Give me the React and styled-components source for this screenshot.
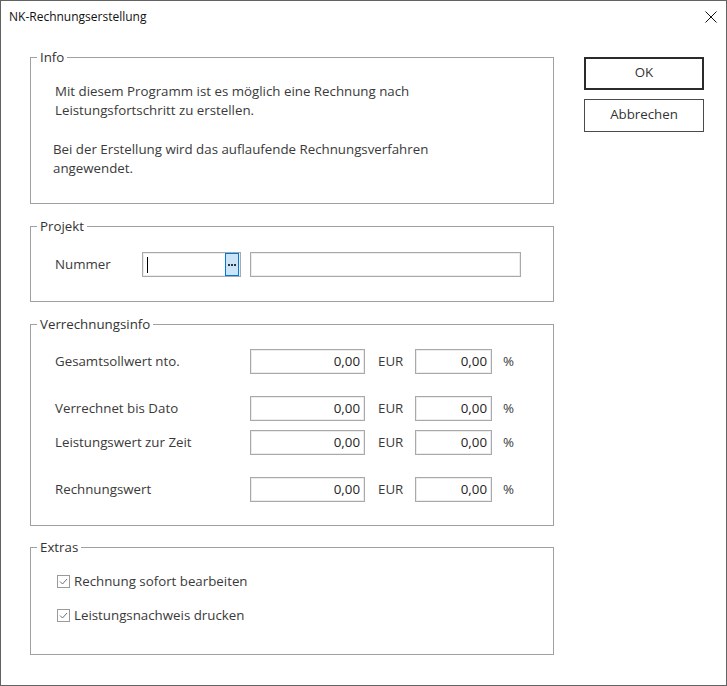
import React from "react";
import styled, { createGlobalStyle } from "styled-components";

const Global = createGlobalStyle`
  html, body { margin: 0; padding: 0; background: #fff; }
  body { font-family: "Open Sans", "Noto Sans", sans-serif; }
  * { box-sizing: border-box; }
`;

const Window = styled.div`
  width: 727px;
  height: 686px;
  border: 1px solid #626262;
  background: #fff;
  display: flex;
  flex-direction: column;
  color: #3a3a3a;
  font-size: 13.3px;
`;

const TitleBar = styled.div`
  height: 31px;
  display: flex;
  align-items: center;
  justify-content: space-between;
  padding: 0 9px 0 8px;
`;

const Title = styled.div`
  font-size: 12px;
  color: #111;
`;

const CloseBtn = styled.div`
  width: 12px;
  height: 12px;
  display: flex;
`;

const Content = styled.div`
  display: flex;
  padding: 16px 0 0 29px;
`;

const LeftCol = styled.div`
  width: 524px;
  display: flex;
  flex-direction: column;
`;

const RightCol = styled.div`
  width: 120px;
  margin-left: 30px;
  padding-top: 9px;
  display: flex;
  flex-direction: column;
  gap: 9px;
`;

const Button = styled.button`
  width: 120px;
  height: 33px;
  background: #fff;
  border: ${(p) => (p.$default ? "2px solid #2b2b2b" : "1px solid #4a4a4a")};
  font-family: inherit;
  font-size: 13.3px;
  color: #333;
  padding: 0 0 3px 0;
`;

const Group = styled.fieldset`
  margin: 0 0 ${(p) => p.$gap || 0}px 0;
  padding: ${(p) => p.$padTop}px 0 0 0;
  border: 1px solid #a0a0a0;
  height: ${(p) => p.$height}px;
  min-width: 0;
`;

const Legend = styled.legend`
  margin-left: 6px;
  padding: 0 3px;
  line-height: 18px;
  font-size: 13.3px;
  color: #333;
`;

const Para = styled.p`
  margin: ${(p) => p.$mt || 0}px 0 0 ${(p) => p.$indent}px;
  line-height: 19px;
`;

const Row = styled.div`
  display: flex;
  align-items: center;
  height: 25px;
  margin-top: ${(p) => p.$mt || 0}px;
  padding-left: 24px;
`;

const Label = styled.div`
  width: ${(p) => p.$w}px;
  flex: none;
  padding-bottom: 2px;
`;

const Box = styled.div`
  width: ${(p) => p.$w}px;
  height: 25px;
  flex: none;
  border: 1px solid #a9a9a9;
  box-shadow: inset 0 0 0 1px #ececec;
  background: #fff;
  display: flex;
  align-items: center;
  justify-content: ${(p) => (p.$right ? "flex-end" : "flex-start")};
  padding: 0 4px 2px 4px;
  color: #222;
  margin-left: ${(p) => p.$ml || 0}px;
`;

const Caret = styled.span`
  width: 1px;
  height: 16px;
  margin-top: 2px;
  background: #000;
`;

const DotsBtn = styled.div`
  margin-left: auto;
  margin-right: -3px;
  width: 14px;
  height: 23px;
  margin-bottom: -2px;
  border: 1px solid #0078d7;
  background: #cce4f7;
  display: flex;
  align-items: center;
  justify-content: center;
  gap: 1px;
`;

const Dot = styled.span`
  width: 2px;
  height: 2px;
  background: #333;
`;

const Unit = styled.div`
  width: ${(p) => p.$w}px;
  padding-left: ${(p) => p.$pl}px;
  padding-bottom: 2px;
  flex: none;
`;

const CheckRow = styled.div`
  display: flex;
  align-items: center;
  height: 19px;
  padding-left: 26px;
  margin-top: ${(p) => p.$mt || 0}px;
`;

const CheckText = styled.span`
  padding-bottom: 1px;
`;

const CheckBox = styled.span`
  width: 13px;
  height: 13px;
  border: 1px solid #9a9a9a;
  display: flex;
  align-items: center;
  justify-content: center;
  margin-right: 4px;
  flex: none;
`;

const rows = [
  { label: "Gesamtsollwert nto.", mt: 0 },
  { label: "Verrechnet bis Dato", mt: 22 },
  { label: "Leistungswert zur Zeit", mt: 9 },
  { label: "Rechnungswert", mt: 22 },
];

function Check({ children, mt }) {
  return (
    <CheckRow $mt={mt}>
      <CheckBox>
        <svg width="9" height="9" viewBox="0 0 9 9">
          <path d="M1 4.5 L3.5 7 L8 2" fill="none" stroke="#6f6f6f" strokeWidth="1" />
        </svg>
      </CheckBox>
      <CheckText>{children}</CheckText>
    </CheckRow>
  );
}

export default function App() {
  return (
    <>
      <Global />
      <Window>
        <TitleBar>
          <Title>NK-Rechnungserstellung</Title>
          <CloseBtn>
            <svg width="12" height="12" viewBox="0 0 12 12">
              <path d="M0.5 0.5 L11.5 11.5 M11.5 0.5 L0.5 11.5" stroke="#111" strokeWidth="1" />
            </svg>
          </CloseBtn>
        </TitleBar>
        <Content>
          <LeftCol>
            <Group $height={156} $padTop={16} $gap={13}>
              <Legend>Info</Legend>
              <Para $indent={24}>
                Mit diesem Programm ist es möglich eine Rechnung nach
                <br />
                Leistungsfortschritt zu erstellen.
              </Para>
              <Para $indent={22} $mt={20}>
                Bei der Erstellung wird das auflaufende Rechnungsverfahren
                <br />
                angewendet.
              </Para>
            </Group>
            <Group $height={85} $padTop={17} $gap={13}>
              <Legend>Projekt</Legend>
              <Row>
                <Label $w={87}>Nummer</Label>
                <Box $w={99}>
                  <Caret />
                  <DotsBtn>
                    <Dot />
                    <Dot />
                    <Dot />
                  </DotsBtn>
                </Box>
                <Box $w={271} $ml={9} />
              </Row>
            </Group>
            <Group $height={211} $padTop={16} $gap={12}>
              <Legend>Verrechnungsinfo</Legend>
              {rows.map((r) => (
                <Row key={r.label} $mt={r.mt}>
                  <Label $w={195}>{r.label}</Label>
                  <Box $w={115} $right>0,00</Box>
                  <Unit $w={50} $pl={13}>EUR</Unit>
                  <Box $w={77} $right>0,00</Box>
                  <Unit $w={30} $pl={11}>%</Unit>
                </Row>
              ))}
            </Group>
            <Group $height={117} $padTop={16}>
              <Legend>Extras</Legend>
              <Check>Rechnung sofort bearbeiten</Check>
              <Check mt={15}>Leistungsnachweis drucken</Check>
            </Group>
          </LeftCol>
          <RightCol>
            <Button $default>OK</Button>
            <Button>Abbrechen</Button>
          </RightCol>
        </Content>
      </Window>
    </>
  );
}
